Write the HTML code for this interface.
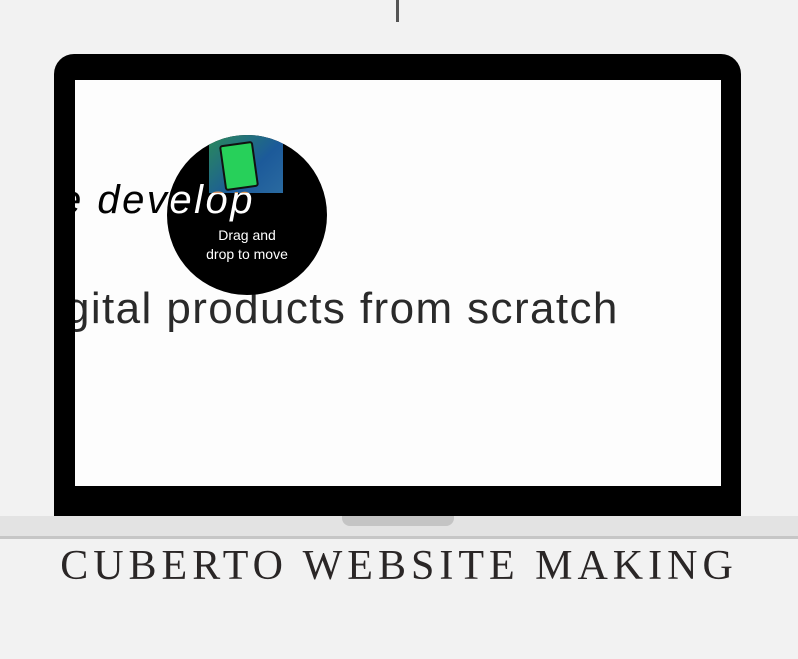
<!DOCTYPE html>
<html><head><style>
body{margin:0;width:798px;height:659px;background:#f2f2f2;position:relative;overflow:hidden;font-family:"Liberation Sans",sans-serif}
.abs{position:absolute}
</style></head><body>
<div class="abs" style="left:396px;top:0;width:3px;height:22px;background:#555"></div>
<div class="abs" style="left:54px;top:54px;width:687px;height:462px;background:#000;border-radius:20px 20px 0 0"></div>
<div class="abs" style="left:75px;top:80px;width:646px;height:406px;background:#fdfdfd;overflow:hidden">
  <div class="abs" style="left:-10px;top:204px;font-size:44px;color:#2a2a2a;white-space:nowrap;letter-spacing:1.4px">gital products from scratch</div>
  <div class="abs" style="left:92px;top:55px;width:160px;height:160px;border-radius:50%;background:#000;overflow:hidden">
    <div class="abs" style="left:42px;top:0;width:74px;height:58px;background:linear-gradient(135deg,#2a8a5a,#1c5a9a 60%,#2a6aa0)"></div>
    <div class="abs" style="left:55px;top:8px;width:30px;height:42px;background:#27d05a;border:2px solid #111;border-radius:3px;transform:rotate(-8deg)"></div>
    <div class="abs" style="left:0;top:91px;width:160px;text-align:center;color:#fff;font-size:14px;line-height:19px">Drag and<br>drop to move</div>
  </div>
  <div class="abs" style="left:-16px;top:98px;font-size:40px;font-style:italic;color:#fff;mix-blend-mode:difference;white-space:nowrap;letter-spacing:2.5px">e develop</div>
</div>
<div class="abs" style="left:0;top:516px;width:798px;height:21px;background:#e3e3e3"></div>
<div class="abs" style="left:0;top:536px;width:798px;height:3px;background:#c6c6c6"></div>
<div class="abs" style="left:342px;top:516px;width:112px;height:10px;background:#c4c4c4;border-radius:0 0 8px 8px"></div>
<div class="abs" style="left:0;top:542px;width:798px;text-align:center;font-family:'Liberation Serif',serif;font-size:42px;letter-spacing:5px;color:#2a2626;white-space:nowrap">CUBERTO WEBSITE MAKING</div>
</body></html>
